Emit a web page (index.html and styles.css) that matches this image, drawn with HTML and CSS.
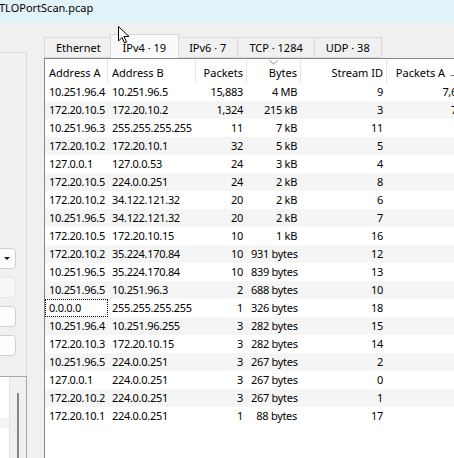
FILE: index.html
```html
<!DOCTYPE html>
<html lang="en">
<head>
    <meta charset="UTF-8">
    <meta name="viewport" content="width=device-width, initial-scale=1.0">
    <title>Conversations · TLOPortScan.pcap</title>
    <link rel="stylesheet" href="styles.css">
</head>
<body>
    <div class="titlebar">TLOPortScan.pcap</div>

    <div class="window">
        <div class="side">
            <div class="group">
                <div class="side-controls">
                    <div class="combo"><span class="combo-arrow"></span></div>
                    <div class="field disabled"></div>
                    <div class="field"></div>
                    <div class="field"></div>
                </div>
            </div>
            <div class="proto-list">
                <div class="proto-items"><div class="proto-alt"></div></div>
                <div class="proto-scroll"><div class="proto-thumb"></div></div>
            </div>
        </div>

        <div class="tab-widget">
            <div class="tabs">
                <button class="tab-button">Ethernet</button>
                <button class="tab-button active">IPv4 · 19</button>
                <button class="tab-button">IPv6 · 7</button>
                <button class="tab-button">TCP · 1284</button>
                <button class="tab-button">UDP · 38</button>
            </div>

            <div class="conv-view">
                <div class="conv-row conv-head">
                    <div class="cell">Address A</div>
                    <div class="cell">Address B</div>
                    <div class="cell num">Packets</div>
                    <div class="cell num sorted">
                        <svg class="sort-mark" width="9" height="5" viewBox="0 0 9 5"><path d="M0.5 0.5 L4.5 4 L8.5 0.5" fill="none" stroke="#8a8a8a" stroke-width="1"/></svg>
                        Bytes
                    </div>
                    <div class="cell num">Stream ID</div>
                    <div class="cell num">Packets A → B</div>
                </div>
                <div id="conv-body">
                    <!-- conversation rows are filled in below -->
                </div>
            </div>
        </div>
    </div>

    <svg class="cursor" width="13" height="19" viewBox="0 0 13 19">
        <path d="M0.5 0.5 V15 L4 11.5 L6.5 17 L8.5 16 L6 10.5 H11 Z" fill="#fff" stroke="#000" stroke-width="1" stroke-linejoin="miter"/>
    </svg>

    <script>
        // address A, address B, packets, bytes, stream id, packets A -> B
        const conversations = [
            ["10.251.96.4", "10.251.96.5", "15,883", "4 MB", "9", "7,641"],
            ["172.20.10.5", "172.20.10.2", "1,324", "215 kB", "3", "713"],
            ["10.251.96.3", "255.255.255.255", "11", "7 kB", "11", "11"],
            ["172.20.10.2", "172.20.10.1", "32", "5 kB", "5", "16"],
            ["127.0.0.1", "127.0.0.53", "24", "3 kB", "4", "12"],
            ["172.20.10.5", "224.0.0.251", "24", "2 kB", "8", "24"],
            ["172.20.10.2", "34.122.121.32", "20", "2 kB", "6", "10"],
            ["10.251.96.5", "34.122.121.32", "20", "2 kB", "7", "10"],
            ["172.20.10.5", "172.20.10.15", "10", "1 kB", "16", "5"],
            ["172.20.10.2", "35.224.170.84", "10", "931 bytes", "12", "5"],
            ["10.251.96.5", "35.224.170.84", "10", "839 bytes", "13", "5"],
            ["10.251.96.5", "10.251.96.3", "2", "688 bytes", "10", "1"],
            ["0.0.0.0", "255.255.255.255", "1", "326 bytes", "18", "1"],
            ["10.251.96.4", "10.251.96.255", "3", "282 bytes", "15", "3"],
            ["172.20.10.3", "172.20.10.15", "3", "282 bytes", "14", "3"],
            ["10.251.96.5", "224.0.0.251", "3", "267 bytes", "2", "3"],
            ["127.0.0.1", "224.0.0.251", "3", "267 bytes", "0", "3"],
            ["172.20.10.2", "224.0.0.251", "3", "267 bytes", "1", "3"],
            ["172.20.10.1", "224.0.0.251", "1", "88 bytes", "17", "1"]
        ];

        const tableBody = document.getElementById('conv-body');
        conversations.forEach((row, i) => {
            const div = document.createElement('div');
            div.className = 'conv-row';
            div.innerHTML = `<div class="cell">${row[0]}</div><div class="cell">${row[1]}</div>` +
                `<div class="cell num">${row[2]}</div><div class="cell num">${row[3]}</div>` +
                `<div class="cell num">${row[4]}</div><div class="cell num">${row[5]}</div>`;
            tableBody.appendChild(div);
        });

        // keyboard focus sits on the 0.0.0.0 row
        tableBody.children[12].firstChild.classList.add('focus');
    </script>
</body>
</html>
```

FILE: styles.css
```css
body {
    margin: 0;
    width: 454px;
    height: 458px;
    overflow: hidden;
    background: #f0f0f0;
    font-family: "Noto Sans", "Liberation Sans", sans-serif;
    font-size: 11px;
    color: #000;
}

.titlebar {
    height: 23px;
    line-height: 15px;
    background: #e1f3f8;
    text-indent: -1px;
    white-space: nowrap;
}

.window {
    display: flex;
    height: 435px;
}

/* left pane, mostly scrolled out of view */
.side {
    width: 27px;
    margin-top: 29px;
    display: flex;
    flex-direction: column;
    flex-shrink: 0;
}
.group {
    height: 323px;
    border-top: 1px solid #dadada;
    border-right: 1px solid #dadada;
}
.side-controls {
    margin-top: 195px;
    display: flex;
    flex-direction: column;
    gap: 8px;
}
.combo, .field {
    margin-left: -10px;
    width: 26px;
    height: 21px;
    box-sizing: border-box;
    border: 1px solid #d0d0d0;
    border-radius: 4px;
    background: #fdfdfd;
}
.combo {
    display: flex;
    align-items: center;
    justify-content: flex-end;
    padding-right: 5px;
}
.combo-arrow {
    width: 0;
    height: 0;
    border-left: 3px solid transparent;
    border-right: 3px solid transparent;
    border-top: 3px solid #1a1a1a;
}
.field.disabled {
    background: #f7f7f7;
    border-color: #e6e6e6;
}
.proto-list {
    flex: 1;
    display: flex;
    border-top: 1px solid #a8a8a8;
    border-right: 1px solid #a8a8a8;
}
.proto-items {
    width: 9px;
    background: #fff;
    border-right: 1px solid #e3e3e3;
}
.proto-alt {
    margin-top: 41px;
    height: 10px;
    background: #f3f3f3;
}
.proto-scroll {
    flex: 1;
    padding: 16px 0 0 7px;
    background: #f0f0f0;
}
.proto-thumb {
    width: 2px;
    height: 100%;
    background: #858585;
}

/* tabs */
.tab-widget {
    margin-left: 17px;
    margin-top: 11px;
    flex: 1;
    min-width: 0;
    display: flex;
    flex-direction: column;
    overflow: hidden;
}
.tabs {
    display: flex;
    align-items: flex-end;
    align-self: flex-start;
    border-bottom: 1px solid #d9d9d9;
}
.tab-button {
    font: inherit;
    color: #000;
    height: 20px;
    box-sizing: border-box;
    padding: 1px 11px 0;
    line-height: 18px;
    margin-right: -1px;
    border: 1px solid #d9d9d9;
    border-bottom: none;
    background: #f0f0f0;
    white-space: nowrap;
}
.tab-button.active {
    position: relative;
    z-index: 1;
    height: 24px;
    padding: 2px 12px 0;
    margin: 0 -2px -1px -2px;
    background: #fafafa;
}

/* conversation list */
.conv-view {
    flex: 1;
    background: #fff;
    border-top: 1px solid #828790;
    border-left: 1px solid #828790;
}
.conv-row {
    display: grid;
    grid-template-columns: 63px 88px 51px 54px 86px 86px;
    height: 18px;
    line-height: 18px;
    white-space: nowrap;
}
#conv-body .conv-row {
    letter-spacing: -0.3px;
}
#conv-body .conv-row:nth-child(even) {
    background: #f5f5f5;
}
.cell {
    padding: 0 3px 0 4px;
    border-right: 1px solid transparent;
    overflow: hidden;
}
.num {
    text-align: right;
}
.conv-head {
    height: 24px;
}
.conv-head .cell {
    position: relative;
    padding-top: 3px;
    line-height: 21px;
    border-right-color: #e5e5e5;
    overflow: visible;
}
.sort-mark {
    position: absolute;
    top: 1px;
    left: 22px;
}
.focus {
    outline: 1px dotted #000;
    outline-offset: -1px;
}

.cursor {
    position: absolute;
    z-index: 5;
    left: 118px;
    top: 26px;
}
```
